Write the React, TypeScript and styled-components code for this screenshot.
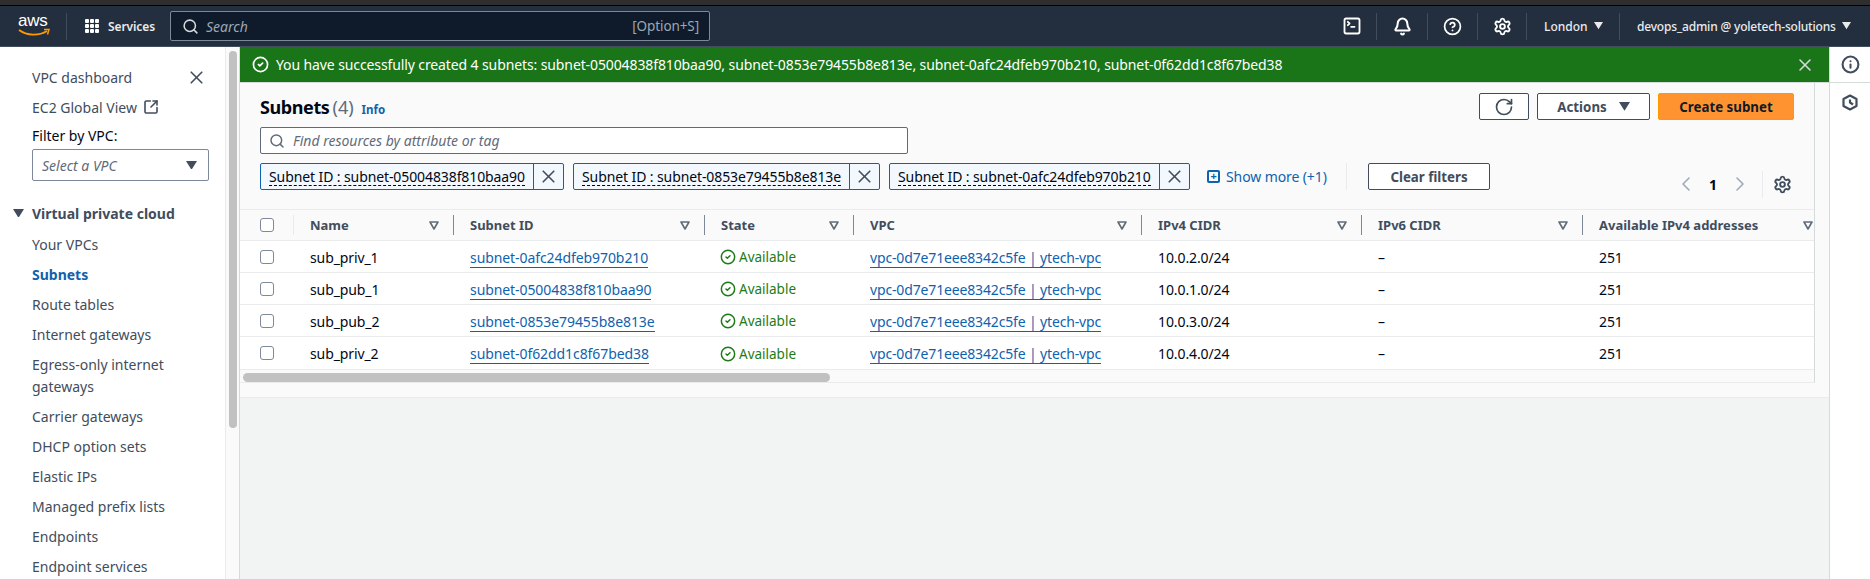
import React from 'react';
import styled, { createGlobalStyle } from 'styled-components';
import { Search, X, RotateCw, Settings, ChevronLeft, ChevronRight, SquareArrowOutUpRight, CircleCheck, Bell, CircleHelp, SquareTerminal, Info } from 'lucide-react';

const Global = createGlobalStyle`
  html, body { margin: 0; padding: 0; height: 100%; overflow: hidden; background: #fff; }
  body { font-family: "Noto Sans", "Open Sans", sans-serif; font-size: 14px; color: #000716; }
  #root { height: 579px; }
  * { box-sizing: border-box; }
`;

const Page = styled.div`
  width: 1870px; height: 579px; display: flex; flex-direction: column; overflow: hidden;
`;
const TopStrip = styled.div`
  height: 6px; flex: none; background: #2e2e2e; border-bottom: 1px solid #000;
`;
const Header = styled.header`
  height: 41px; flex: none; background: #232f3e; display: flex; align-items: center; color: #d5dbdb;
  border-bottom: 1px solid #414d5c;
`;
const LogoBox = styled.div`
  width: 67px; height: 27px; padding-left: 18px; border-right: 1px solid #414d5c; position: relative; flex: none;
`;
const LogoText = styled.span`
  display: block; color: #fff; font-size: 17px; line-height: 15px; letter-spacing: -0.2px; font-family: "Liberation Sans", sans-serif;
`;
const ServicesBtn = styled.div`
  display: flex; align-items: center; gap: 8px; margin-left: 17px; width: 86px; flex: none;
  font-size: 12px; font-weight: 600; color: #e9ebed; letter-spacing: -0.1px;
`;
const Omni = styled.div`
  width: 540px; height: 30px; flex: none; background: #0f1b2a; border: 1px solid #7d8998; border-radius: 2px;
  display: flex; align-items: center; padding: 0 10px 0 11px; gap: 7px; color: #9ba7b6;
`;
const OmniText = styled.span`
  flex: 1; font-style: italic; font-size: 14px;
`;
const OmniKey = styled.span`
  font-size: 13.5px; letter-spacing: -0.1px;
`;
const HeaderRight = styled.div`
  margin-left: auto; display: flex; align-items: center; height: 27px; padding-right: 20px;
`;
const HIcon = styled.div<{ $w: number }>`
  width: ${p => p.$w}px; height: 27px; display: flex; align-items: center; justify-content: center;
  border-right: 1px solid #414d5c; color: #fff; flex: none;
`;
const HMenu = styled.div<{ $w: number; $last?: boolean }>`
  width: ${p => p.$w}px; height: 27px; display: flex; align-items: center; gap: 6px; flex: none; padding-left: 17px;
  font-size: 12px; font-weight: 500; color: #e9ebed; white-space: nowrap; letter-spacing: ${p => (p.$last ? '-0.18px' : '0')};
  border-right: ${p => (p.$last ? 'none' : '1px solid #414d5c')};
`;
const Caret = styled.svg<{ $c?: string }>`
  display: block; flex: none; fill: ${p => p.$c || 'currentColor'};
`;
const Body = styled.div`
  flex: 1; display: flex; min-height: 0;
`;
const Side = styled.nav`
  width: 225px; flex: none; padding: 17px 0 0 32px; background: #fff; color: #414d5c; position: relative; overflow: hidden;
`;
const SideTop = styled.div`
  height: 26px; display: flex; align-items: center; justify-content: space-between; padding-right: 18px; margin-top: 0;
`;
const SideLink = styled.div`
  display: flex; align-items: center; gap: 6px; height: 26px; margin-top: 4px;
`;
const FilterLabel = styled.div`
  color: #000716; height: 20px; line-height: 20px; margin-top: 6px;
`;
const VpcSelect = styled.div`
  width: 177px; height: 32px; margin-top: 3px; border: 1px solid #7d8998; border-radius: 2px; display: flex; align-items: center;
  justify-content: space-between; padding: 0 11px 0 9px; font-style: italic; color: #5f6b7a; background: #fff;
`;
const SectionHead = styled.div`
  display: flex; align-items: center; gap: 8px; margin: 22px 0 0 -19px; height: 20px; font-weight: 700; color: #414d5c;
`;
const NavList = styled.ul`
  list-style: none; margin: 11px 0 0; padding: 0;
`;
const NavItem = styled.li<{ $active?: boolean }>`
  line-height: 22px; margin-bottom: 8px; width: 172px;
  color: ${p => (p.$active ? '#0f62ae' : '#414d5c')}; font-weight: ${p => (p.$active ? 700 : 400)};
`;
const Gutter = styled.div`
  width: 15px; flex: none; background: #fafafa; border-left: 1px solid #e9ebed; border-right: 1px solid #d5dbdb; padding: 4px 0 0 3px;
`;
const GutterThumb = styled.div`
  width: 8px; height: 377px; background: #c1c1c1; border-radius: 4px;
`;
const Main = styled.main`
  width: 1589px; flex: none; background: #f2f3f3; display: flex; flex-direction: column;
`;
const Flash = styled.div`
  height: 36px; flex: none; background: #1a7518; color: #fff; display: flex; align-items: center; padding: 0 14px 0 12px; gap: 7px;
  border-bottom: 1px solid #d5dbdb;
`;
const FlashText = styled.span`
  flex: 1; font-size: 14px; letter-spacing: -0.11px;
`;
const Upper = styled.div`
  height: 315px; flex: none; background: #fafafa; border-bottom: 1px solid #e9ebed;
`;
const Card = styled.section`
  width: 1575px; height: 300px; background: #fafafa; border-right: 1px solid #d5dbdb; border-bottom: 1px solid #e9ebed; display: flex; flex-direction: column;
`;
const CardHead = styled.div`
  height: 126px; flex: none; padding: 10px 20px 0 20px; display: grid; grid-template-columns: 1fr auto; align-content: start; position: relative;
`;
const TitleRow = styled.div`
  display: flex; align-items: baseline; height: 27px; line-height: 28px;
`;
const Title = styled.h1`
  margin: 0; font-size: 18px; font-weight: 700; color: #000716; letter-spacing: -0.4px;
`;
const Count = styled.span`
  font-size: 18px; color: #5f6b7a; margin-left: 3px; font-weight: 400;
`;
const InfoLink = styled.span`
  font-size: 11.5px; font-weight: 700; color: #0f62ae; margin-left: 8px;
`;
const Actions = styled.div`
  display: flex; gap: 8px;
`;
const Btn = styled.div<{ $w: number; $primary?: boolean }>`
  width: ${p => p.$w}px; height: 27px; display: flex; align-items: center; justify-content: center; gap: 12px;
  font-size: 13.3px; font-weight: 700; border-radius: 2px;
  border: 1px solid ${p => (p.$primary ? '#ff9900' : '#414d5c')};
  background: ${p => (p.$primary ? '#ff9330' : '#fff')};
  color: ${p => (p.$primary ? '#0f1b2a' : '#414d5c')};
`;
const FilterBox = styled.div`
  grid-column: 1 / 3; width: 648px; height: 27px; margin-top: 7px; background: #fff; border: 1px solid #5f6b7a; border-radius: 2px;
  display: flex; align-items: center; gap: 8px; padding-left: 8px; font-style: italic; color: #5f6b7a;
`;
const ChipRow = styled.div`
  grid-column: 1 / 3; display: flex; align-items: center; margin-top: 9px; height: 27px; gap: 9px;
`;
const Chip = styled.div<{ $w: number }>`
  width: ${p => p.$w}px; height: 27px; flex: none; display: flex; background: #f2f8fd; border: 1px solid #0f62ae; border-radius: 2px;
`;
const ChipLabel = styled.div`
  flex: 1; display: flex; align-items: center; padding-left: 8px; border-right: 1px solid #0f62ae; white-space: nowrap; overflow: hidden;
`;
const ChipText = styled.span`
  line-height: 17px; border-bottom: 1px dashed #000716; font-size: 14px; letter-spacing: -0.1px;
`;
const ChipClose = styled.div`
  width: 29px; flex: none; display: flex; align-items: center; justify-content: center; color: #414d5c;
`;
const ShowMore = styled.div`
  display: flex; align-items: center; gap: 6px; color: #0f62ae; margin-left: 8px; width: 130px; height: 27px; flex: none; white-space: nowrap; letter-spacing: -0.1px;
`;
const PlusBox = styled.span`
  width: 13px; height: 13px; border: 2px solid #0f62ae; border-radius: 2px; font-size: 11px; line-height: 8px; font-weight: 700; text-align: center; flex: none;
`;
const VRule = styled.div`
  width: 1px; height: 27px; background: #e9ebed; flex: none;
`;
const ClearBtn = styled(Btn)`
  margin-left: 12px;
`;
const Pager = styled.div`
  margin-left: auto; margin-top: 15px; display: flex; align-items: center; height: 27px; margin-right: -8px; color: #000716; flex: none;
`;
const PagerNum = styled.span`
  width: 30px; text-align: center; font-weight: 700;
`;
const PagerGear = styled.div`
  margin-left: 10px; border-left: 1px solid #e9ebed; height: 27px; width: 40px; display: flex; align-items: center; justify-content: center; color: #414d5c;
`;
const Table = styled.div`
  flex: 1; overflow: hidden; border-top: 1px solid #e9ebed; display: flex; flex-direction: column;
`;
const Row = styled.div<{ $head?: boolean; $h: number }>`
  display: grid; grid-template-columns: 53px 160px 251px 149px 288px 220px 221px 245px; height: ${p => p.$h}px; flex: none;
  width: 1587px; align-items: center; background: ${p => (p.$head ? '#fafafa' : '#fff')};
  border-bottom: 1px solid #e9ebed;
`;
const CheckCell = styled.div`
  padding-left: 20px; display: flex;
`;
const Check = styled.span`
  display: block; width: 14px; height: 14px; border: 1px solid #7d8998; border-radius: 3px; background: #fff;
`;
const HeadCell = styled.div<{ $light?: boolean }>`
  height: 20px; display: flex; align-items: center; justify-content: space-between; padding: 0 14px 0 16px;
  border-left: 1px solid ${p => (p.$light ? '#e9ebed' : '#7d8998')};
  font-weight: 700; font-size: 13px; color: #414d5c; white-space: nowrap;
`;
const Cell = styled.div`
  padding-left: 17px; white-space: nowrap; font-size: 14px; letter-spacing: -0.1px; color: #000716; display: flex; align-items: center; padding-top: 1px;
`;
const A = styled.span<{ $tight?: boolean }>`
  color: #0f62ae; border-bottom: 1px solid #0f62ae; line-height: 18px; display: block; margin-top: 2px;
  letter-spacing: ${p => (p.$tight ? '-0.15px' : '-0.08px')};
`;
const Status = styled.span`
  display: flex; align-items: center; gap: 3px; color: #1d7b16; font-size: 13.5px; letter-spacing: 0; margin-left: -1px;
`;
const HScroll = styled.div`
  flex: 1; padding: 3px 0 0 3px; background: #fafafa;
`;
const HThumb = styled.div`
  width: 587px; height: 9px; border-radius: 5px; background: #c1c1c1;
`;
const Rail = styled.aside`
  flex: 1; background: #fff; border-left: 1px solid #d5dbdb; display: flex; flex-direction: column; color: #414d5c;
`;
const RailBtn = styled.div<{ $h: number; $line?: boolean }>`
  height: ${p => p.$h}px; display: flex; align-items: center; justify-content: center; border-bottom: ${p => (p.$line ? '1px solid #d5dbdb' : 'none')};
`;

const Tri = ({ s = 10, c }: { s?: number; c?: string }) => (
  <Caret $c={c} width={s} height={s * 0.8} viewBox="0 0 10 8"><path d="M0 0h10L5 8z" /></Caret>
);
const SortIcon = () => (
  <svg width="10" height="9" viewBox="0 0 10 9" fill="none" stroke="#5f6b7a" strokeWidth="1.6"><path d="M1 1h8L5 8z" strokeLinejoin="round" /></svg>
);
const GridIcon = () => (
  <svg width="16" height="16" viewBox="0 0 16 16" fill="#fff">
    {[1, 6, 11].flatMap(y => [1, 6, 11].map(x => <rect key={`${x}${y}`} x={x} y={y} width="4" height="4" rx="1" />))}
  </svg>
);
const RailHex = () => (
  <svg width="16" height="17" viewBox="0 0 16 17" fill="none" stroke="#414d5c" strokeWidth="2.2" strokeLinejoin="round">
    <path d="M8 1.5 14.5 5v7L8 15.5 1.5 12V5z" /><path d="M8 5.5v3l3 2" />
  </svg>
);

const rows = [
  ['sub_priv_1', 'subnet-0afc24dfeb970b210', '10.0.2.0/24'],
  ['sub_pub_1', 'subnet-05004838f810baa90', '10.0.1.0/24'],
  ['sub_pub_2', 'subnet-0853e79455b8e813e', '10.0.3.0/24'],
  ['sub_priv_2', 'subnet-0f62dd1c8f67bed38', '10.0.4.0/24'],
];
const heads = ['Name', 'Subnet ID', 'State', 'VPC', 'IPv4 CIDR', 'IPv6 CIDR', 'Available IPv4 addresses'];
const nav = ['Your VPCs', 'Subnets', 'Route tables', 'Internet gateways', 'Egress-only internet gateways', 'Carrier gateways', 'DHCP option sets', 'Elastic IPs', 'Managed prefix lists', 'Endpoints', 'Endpoint services'];

export default function App() {
  return (
    <Page>
      <Global />
      <TopStrip />
      <Header>
        <LogoBox>
          <LogoText>aws</LogoText>
          <svg width="32" height="10" viewBox="0 0 32 10" fill="none" style={{ display: 'block' }}>
            <path d="M1 2c8 6 20 6 28 1" stroke="#ff9900" strokeWidth="1.8" /><path d="M26 1.5h5l-1.5 5" stroke="#ff9900" strokeWidth="1.5" />
          </svg>
        </LogoBox>
        <ServicesBtn><GridIcon />Services</ServicesBtn>
        <Omni>
          <Search size={17} strokeWidth={2.2} color="#d5dbdb" />
          <OmniText>Search</OmniText>
          <OmniKey>[Option+S]</OmniKey>
        </Omni>
        <HeaderRight>
          <HIcon $w={49}><SquareTerminal size={20} strokeWidth={2.2} /></HIcon>
          <HIcon $w={51}><Bell size={19} strokeWidth={2.6} /></HIcon>
          <HIcon $w={50}><CircleHelp size={19} strokeWidth={2.2} /></HIcon>
          <HIcon $w={49}><Settings size={19} strokeWidth={2.4} /></HIcon>
          <HMenu $w={93}>London <Tri s={9} /></HMenu>
          <HMenu $w={230} $last>devops_admin @ yoletech-solutions <Tri s={9} /></HMenu>
        </HeaderRight>
      </Header>
      <Body>
        <Side>
          <SideTop>VPC dashboard <X size={21} strokeWidth={1.9} color="#414d5c" /></SideTop>
          <SideLink>EC2 Global View <SquareArrowOutUpRight size={16} strokeWidth={2.4} /></SideLink>
          <FilterLabel>Filter by VPC:</FilterLabel>
          <VpcSelect>Select a VPC <Tri s={11} c="#414d5c" /></VpcSelect>
          <SectionHead><Tri s={11} c="#414d5c" />Virtual private cloud</SectionHead>
          <NavList>
            {nav.map(n => <NavItem key={n} $active={n === 'Subnets'}>{n}</NavItem>)}
          </NavList>
        </Side>
        <Gutter><GutterThumb /></Gutter>
        <Main>
          <Flash>
            <CircleCheck size={17} strokeWidth={2.4} />
            <FlashText>You have successfully created 4 subnets: subnet-05004838f810baa90, subnet-0853e79455b8e813e, subnet-0afc24dfeb970b210, subnet-0f62dd1c8f67bed38</FlashText>
            <X size={20} strokeWidth={1.9} color="#d5dbdb" />
          </Flash>
          <Upper>
            <Card>
              <CardHead>
                <TitleRow><Title>Subnets</Title><Count>(4)</Count><InfoLink>Info</InfoLink></TitleRow>
                <Actions>
                  <Btn $w={50}><RotateCw size={20} strokeWidth={2} /></Btn>
                  <Btn $w={113}>Actions <Tri s={11} /></Btn>
                  <Btn $w={136} $primary>Create subnet</Btn>
                </Actions>
                <FilterBox><Search size={16} strokeWidth={2.2} />Find resources by attribute or tag</FilterBox>
                <ChipRow>
                  <Chip $w={304}><ChipLabel><ChipText>Subnet ID : subnet-05004838f810baa90</ChipText></ChipLabel><ChipClose><X size={21} strokeWidth={1.9} /></ChipClose></Chip>
                  <Chip $w={307}><ChipLabel><ChipText>Subnet ID : subnet-0853e79455b8e813e</ChipText></ChipLabel><ChipClose><X size={21} strokeWidth={1.9} /></ChipClose></Chip>
                  <Chip $w={301}><ChipLabel><ChipText>Subnet ID : subnet-0afc24dfeb970b210</ChipText></ChipLabel><ChipClose><X size={21} strokeWidth={1.9} /></ChipClose></Chip>
                  <ShowMore><PlusBox>+</PlusBox>Show more (+1)</ShowMore>
                  <VRule />
                  <ClearBtn $w={122}>Clear filters</ClearBtn>
                  <Pager>
                    <ChevronLeft size={24} strokeWidth={1.5} color="#9ba7b6" />
                    <PagerNum>1</PagerNum>
                    <ChevronRight size={24} strokeWidth={1.5} color="#9ba7b6" />
                    <PagerGear><Settings size={19} strokeWidth={2.4} /></PagerGear>
                  </Pager>
                </ChipRow>
              </CardHead>
              <Table>
                <Row $head $h={31}>
                  <CheckCell><Check /></CheckCell>
                  {heads.map((h, i) => <HeadCell key={h} $light={i === 0}>{h}<SortIcon /></HeadCell>)}
                </Row>
                {rows.map((r, i) => (
                  <Row key={r[0]} $h={i === 3 ? 33 : 32}>
                    <CheckCell><Check /></CheckCell>
                    <Cell>{r[0]}</Cell>
                    <Cell><A>{r[1]}</A></Cell>
                    <Cell><Status><CircleCheck size={16} strokeWidth={2.2} />Available</Status></Cell>
                    <Cell><A $tight>vpc-0d7e71eee8342c5fe | ytech-vpc</A></Cell>
                    <Cell>{r[2]}</Cell>
                    <Cell>–</Cell>
                    <Cell>251</Cell>
                  </Row>
                ))}
                <HScroll><HThumb /></HScroll>
              </Table>
            </Card>
          </Upper>
        </Main>
        <Rail>
          <RailBtn $h={36} $line><Info size={19} strokeWidth={2.6} /></RailBtn>
          <RailBtn $h={38}><RailHex /></RailBtn>
        </Rail>
      </Body>
    </Page>
  );
}
